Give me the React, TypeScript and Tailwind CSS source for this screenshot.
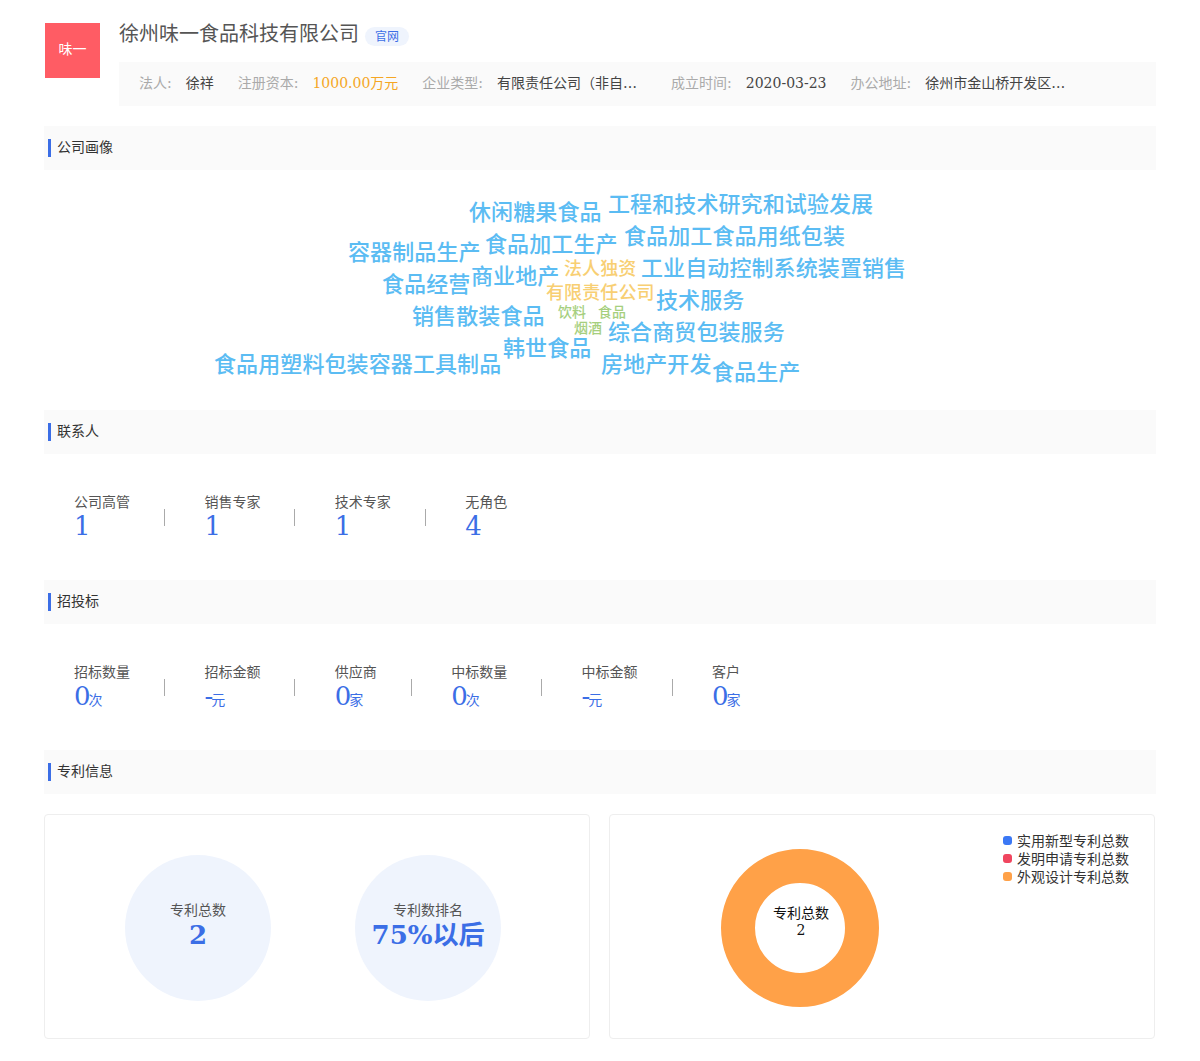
const words = [
  { text: "休闲糖果食品", cls: "left-[425px] top-[29px] text-[22px] text-[#5bbcf3]" },
  { text: "工程和技术研究和试验发展", cls: "left-[564px] top-[21px] text-[22px] text-[#5bbcf3]" },
  { text: "容器制品生产", cls: "left-[304px] top-[69px] text-[22px] text-[#5bbcf3]" },
  { text: "食品加工生产", cls: "left-[441px] top-[61px] text-[22px] text-[#5bbcf3]" },
  { text: "食品加工食品用纸包装", cls: "left-[580px] top-[53px] text-[22px] text-[#5bbcf3]" },
  { text: "食品经营", cls: "left-[338px] top-[101px] text-[22px] text-[#5bbcf3]" },
  { text: "商业地产", cls: "left-[427px] top-[93px] text-[22px] text-[#5bbcf3]" },
  { text: "法人独资", cls: "left-[520px] top-[88px] text-[18px] text-[#f8cf73]" },
  { text: "工业自动控制系统装置销售", cls: "left-[597px] top-[85px] text-[22px] text-[#5bbcf3]" },
  { text: "有限责任公司", cls: "left-[502px] top-[112px] text-[18px] text-[#f8cf73]" },
  { text: "技术服务", cls: "left-[612px] top-[117px] text-[22px] text-[#5bbcf3]" },
  { text: "销售散装食品", cls: "left-[368px] top-[133px] text-[22px] text-[#5bbcf3]" },
  { text: "饮料", cls: "left-[514px] top-[134px] text-[14px] text-[#a6cf7e]" },
  { text: "食品", cls: "left-[554px] top-[134px] text-[14px] text-[#a6cf7e]" },
  { text: "烟酒", cls: "left-[530px] top-[150px] text-[14px] text-[#a6cf7e]" },
  { text: "综合商贸包装服务", cls: "left-[564px] top-[149px] text-[22px] text-[#5bbcf3]" },
  { text: "韩世食品", cls: "left-[459px] top-[165px] text-[22px] text-[#5bbcf3]" },
  { text: "食品用塑料包装容器工具制品", cls: "left-[170px] top-[181px] text-[22px] text-[#5bbcf3]" },
  { text: "房地产开发", cls: "left-[557px] top-[181px] text-[22px] text-[#5bbcf3]" },
  { text: "食品生产", cls: "left-[668px] top-[189px] text-[22px] text-[#5bbcf3]" },
];

const contacts = [
  { label: "公司高管", value: "1" },
  { label: "销售专家", value: "1" },
  { label: "技术专家", value: "1" },
  { label: "无角色", value: "4" },
];

const bids = [
  { label: "招标数量", value: "0", unit: "次" },
  { label: "招标金额", value: "-", unit: "元" },
  { label: "供应商", value: "0", unit: "家" },
  { label: "中标数量", value: "0", unit: "次" },
  { label: "中标金额", value: "-", unit: "元" },
  { label: "客户", value: "0", unit: "家" },
];

const legend = [
  { label: "实用新型专利总数", color: "bg-[#3b78f5]" },
  { label: "发明申请专利总数", color: "bg-[#f0465f]" },
  { label: "外观设计专利总数", color: "bg-[#ffa148]" },
];

function SectionTitle({ title }: { title: string }) {
  return (
    <div className="flex h-[44px] items-center bg-[#fafafa] pl-[4px] text-[14px] text-[#333]">
      <span className="mr-[6px] h-[18px] w-[3px] bg-[#3b6ee6]" />
      <span className="mb-[2px]">{title}</span>
    </div>
  );
}

function StatRow({ items }: { items: { label: string; value: string; unit?: string }[] }) {
  return (
    <div className="flex h-[126px] items-center pb-[3px] pl-[30px]">
      {items.map((item, i) => (
        <div key={item.label} className="flex items-center">
          <div className="flex flex-col">
            <span className="h-[20px] text-[14px] leading-[20px] text-[#555]">{item.label}</span>
            <span className="mt-px h-[26px] text-[26px] leading-[26px] text-[#3b6ee6]">
              {item.value}
              {item.unit && <span className="-ml-[2px] text-[14px]">{item.unit}</span>}
            </span>
          </div>
          {i < items.length - 1 && (
            <span className="ml-[34px] mr-[39.4px] mt-[4px] h-[17px] w-px bg-[#aaa]" />
          )}
        </div>
      ))}
    </div>
  );
}

function Circle({ label, value }: { label: string; value: string }) {
  return (
    <div className="flex h-[146px] w-[146px] flex-col items-center justify-center rounded-full bg-[#eff4fd] pb-[6px]">
      <span className="h-[20px] text-[14px] leading-[20px] text-[#555]">{label}</span>
      <span className="h-[30px] whitespace-nowrap text-[26px] font-bold leading-[30px] text-[#3b6ee6]">
        {value}
      </span>
    </div>
  );
}

export default function App() {
  return (
    <div className="min-h-[1061px] bg-white px-[44px] pt-[16px] font-['DejaVu_Serif','Noto_Sans_CJK_SC',serif]">
      <div className="flex">
        <div className="ml-px mt-[7px] flex h-[55px] w-[55px] shrink-0 items-center justify-center bg-[#ff5c64] pb-[2px] text-[14px] text-white">
          味一
        </div>
        <div className="ml-[19px] flex-1">
          <div className="flex h-[36px] items-center">
            <span className="text-[20px] text-[#555]">徐州味一食品科技有限公司</span>
            <span className="ml-[6px] mt-[5px] flex h-[19px] w-[44px] items-center justify-center rounded-full bg-[#eff4fd] text-[12px] text-[#3b6ee6]">
              官网
            </span>
          </div>
          <div className="mt-[10px] flex h-[44px] items-center gap-[24px] bg-[#fafafa] pb-[2px] pl-[20px] text-[14px] text-[#444]">
            <div className="flex">
              <span className="mr-[14px] text-[#aaa]">法人:</span>徐祥
            </div>
            <div className="flex">
              <span className="mr-[14px] text-[#aaa]">注册资本:</span>
              <span className="text-[#f5a623]">1000.00万元</span>
            </div>
            <div className="flex">
              <span className="mr-[14px] text-[#aaa]">企业类型:</span>
              <span className="w-[150px] truncate">有限责任公司（非自然人投资或控股的法人独资）</span>
            </div>
            <div className="flex">
              <span className="mr-[14px] text-[#aaa]">成立时间:</span>2020-03-23
            </div>
            <div className="flex">
              <span className="mr-[14px] text-[#aaa]">办公地址:</span>
              <span className="w-[150px] truncate">徐州市金山桥开发区鑫科路</span>
            </div>
          </div>
        </div>
      </div>

      <div className="mt-[20px]">
        <SectionTitle title="公司画像" />
        <div className="relative h-[240px] font-['Noto_Sans_CJK_SC',sans-serif] font-medium tracking-[0.1px]">
          {words.map((w, i) => (
            <span key={i} className={`absolute whitespace-nowrap leading-none ${w.cls}`}>
              {w.text}
            </span>
          ))}
        </div>
      </div>

      <SectionTitle title="联系人" />
      <StatRow items={contacts} />

      <SectionTitle title="招投标" />
      <StatRow items={bids} />

      <SectionTitle title="专利信息" />

      <div className="mt-[20px] flex justify-between pr-px">
        <div className="flex h-[225px] w-[546px] items-center gap-[84px] rounded-[4px] border border-[#eee] pl-[80px] pt-[2px]">
          <Circle label="专利总数" value="2" />
          <Circle label="专利数排名" value="75%以后" />
        </div>
        <div className="relative flex h-[225px] w-[546px] items-center rounded-[4px] border border-[#eee] pt-[2px]">
          <div className="relative ml-[111px] h-[158px] w-[158px]">
            <svg viewBox="0 0 158 158" className="h-full w-full">
              <circle cx="79" cy="79" r="62" fill="none" stroke="#ffa148" strokeWidth="34" />
            </svg>
            <div className="absolute inset-x-0 top-[56px] pl-[2px] text-center text-[14px] leading-[17px] text-[#111]">
              <div>专利总数</div>
              <div>2</div>
            </div>
          </div>
          <div className="absolute right-[25px] top-[16px] flex flex-col font-['Noto_Sans_CJK_SC',sans-serif]">
            {legend.map((l) => (
              <div key={l.label} className="flex h-[18px] items-center text-[14px] text-[#333]">
                <span className={`mr-[5px] h-[9px] w-[9px] rounded-[3px] ${l.color}`} />
                {l.label}
              </div>
            ))}
          </div>
        </div>
      </div>
    </div>
  );
}
